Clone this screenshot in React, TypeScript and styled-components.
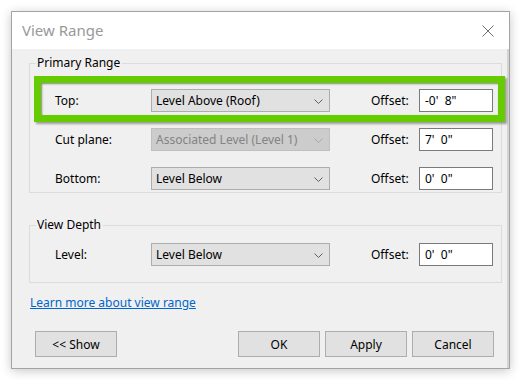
import React from "react";
import styled, { createGlobalStyle } from "styled-components";

const GlobalStyle = createGlobalStyle`
  html, body {
    margin: 0;
    padding: 0;
    background: #ffffff;
  }
  body {
    font-family: "Noto Sans", "Open Sans", sans-serif;
    font-size: 12px;
    color: #000;
  }
`;

type RowData = {
  label: string;
  value: string;
  offset: string;
  disabled?: boolean;
  highlight?: boolean;
};

const primaryRows: RowData[] = [
  { label: "Top:", value: "Level Above (Roof)", offset: "-0'  8\"", highlight: true },
  { label: "Cut plane:", value: "Associated Level (Level 1)", offset: "7'  0\"", disabled: true },
  { label: "Bottom:", value: "Level Below", offset: "0'  0\"" },
];

const depthRows: RowData[] = [{ label: "Level:", value: "Level Below", offset: "0'  0\"" }];

const Chevron = () => (
  <svg width="9" height="5" viewBox="0 0 9 5">
    <path d="M0.5 0.5 L4.5 4.5 L8.5 0.5" fill="none" stroke="currentColor" strokeWidth="1" />
  </svg>
);

const CloseIcon = () => (
  <svg width="12" height="12" viewBox="0 0 12 12">
    <path d="M0.5 0.5 L11.5 11.5 M11.5 0.5 L0.5 11.5" stroke="#6e6e6e" strokeWidth="1" />
  </svg>
);

const FieldRows = ({ rows }: { rows: RowData[] }) => (
  <Rows>
    {rows.map((r) => (
      <FieldRow key={r.label}>
        {r.highlight && <Highlight />}
        <RowLabel>{r.label}</RowLabel>
        <Combo $disabled={r.disabled}>
          <span>{r.value}</span>
          <Chevron />
        </Combo>
        <OffsetLabel>Offset:</OffsetLabel>
        <OffsetInput>{r.offset}</OffsetInput>
      </FieldRow>
    ))}
  </Rows>
);

export default function App() {
  return (
    <Page>
      <GlobalStyle />
      <Dialog>
        <TitleBar>
          <Title>View Range</Title>
          <CloseButton>
            <CloseIcon />
          </CloseButton>
        </TitleBar>
        <Body>
          <Group $padTop={18} $padBottom={2}>
            <Legend>Primary Range</Legend>
            <FieldRows rows={primaryRows} />
          </Group>
          <Group $padTop={10} $padBottom={16} $marginTop={24}>
            <Legend>View Depth</Legend>
            <FieldRows rows={depthRows} />
          </Group>
          <HelpLink href="#">Learn more about view range</HelpLink>
          <ButtonBar>
            <Button>&lt;&lt; Show</Button>
            <Spacer />
            <Button>OK</Button>
            <Button>Apply</Button>
            <Button>Cancel</Button>
          </ButtonBar>
        </Body>
      </Dialog>
    </Page>
  );
}

const Page = styled.div`
  padding: 11px;
`;

const Dialog = styled.div`
  box-sizing: border-box;
  width: 499px;
  height: 358px;
  border: 1px solid #a3a3a3;
  background: #f0f0f0;
  box-shadow: 0 2px 10px rgba(0, 0, 0, 0.22);
  display: flex;
  flex-direction: column;
`;

const TitleBar = styled.div`
  height: 37px;
  background: #ffffff;
  display: flex;
  align-items: center;
  padding: 0 15px 0 10px;
`;

const Title = styled.div`
  flex: 1;
  font-size: 15px;
  color: #999999;
  padding-bottom: 1px;
`;

const CloseButton = styled.div`
  display: flex;
  align-items: center;
  justify-content: center;
  width: 12px;
  height: 12px;
`;

const Body = styled.div`
  flex: 1;
  display: flex;
  flex-direction: column;
  padding: 6px 5px 11px 17px;
  border-right: 2px solid #d4d4d4;
`;

const Group = styled.fieldset<{ $padTop: number; $padBottom: number; $marginTop?: number }>`
  margin: ${(p) => p.$marginTop ?? 0}px 0 0 0;
  padding: ${(p) => p.$padTop}px 9px ${(p) => p.$padBottom}px 6px;
  border: 1px solid #dcdcdc;
  min-inline-size: 0;
`;

const Legend = styled.legend`
  padding: 0 2px 0 1px;
  font-size: 12px;
  line-height: 16px;
  color: #000;
`;

const Rows = styled.div`
  display: flex;
  flex-direction: column;
  gap: 16px;
  padding-left: 19px;
`;

const FieldRow = styled.div`
  position: relative;
  display: grid;
  grid-template-columns: 96px 179px 89px 74px;
  align-items: center;
  height: 23px;
`;

const Highlight = styled.div`
  position: absolute;
  top: -13px;
  bottom: -10px;
  left: -21px;
  right: -13px;
  border: 7px solid #66cc00;
  box-shadow: 2px 2px 2px rgba(0, 0, 0, 0.35), inset 1px 1px 2px rgba(0, 0, 0, 0.45);
  pointer-events: none;
`;

const RowLabel = styled.div`
  line-height: 16px;
`;

const Combo = styled.div<{ $disabled?: boolean }>`
  box-sizing: border-box;
  height: 23px;
  display: flex;
  align-items: center;
  justify-content: space-between;
  padding: 0 6px 0 4px;
  border: 1px solid ${(p) => (p.$disabled ? "#bfbfbf" : "#adadad")};
  background: ${(p) => (p.$disabled ? "#cccccc" : "#e1e1e1")};
  color: ${(p) => (p.$disabled ? "#838383" : "#000000")};
  white-space: nowrap;

  svg {
    color: ${(p) => (p.$disabled ? "#a8a8a8" : "#606060")};
    margin-top: 1px;
  }
`;

const OffsetLabel = styled.div`
  padding-left: 41px;
  line-height: 16px;
`;

const OffsetInput = styled.div`
  box-sizing: border-box;
  height: 23px;
  display: flex;
  align-items: center;
  padding: 0 5px;
  background: #ffffff;
  border: 1px solid #7a7a7a;
  white-space: pre;
`;

const HelpLink = styled.a`
  align-self: flex-start;
  margin: 12px 0 0 1px;
  line-height: 16px;
  color: #0066cc;
  text-decoration: underline;
`;

const ButtonBar = styled.div`
  display: flex;
  gap: 5px;
  margin: 20px 8px 0 6px;
`;

const Spacer = styled.div`
  flex: 1;
`;

const Button = styled.button`
  box-sizing: border-box;
  width: 82px;
  height: 26px;
  padding: 0;
  font-family: inherit;
  font-size: 12px;
  color: #000;
  background: #e1e1e1;
  border: 1px solid #adadad;
`;
